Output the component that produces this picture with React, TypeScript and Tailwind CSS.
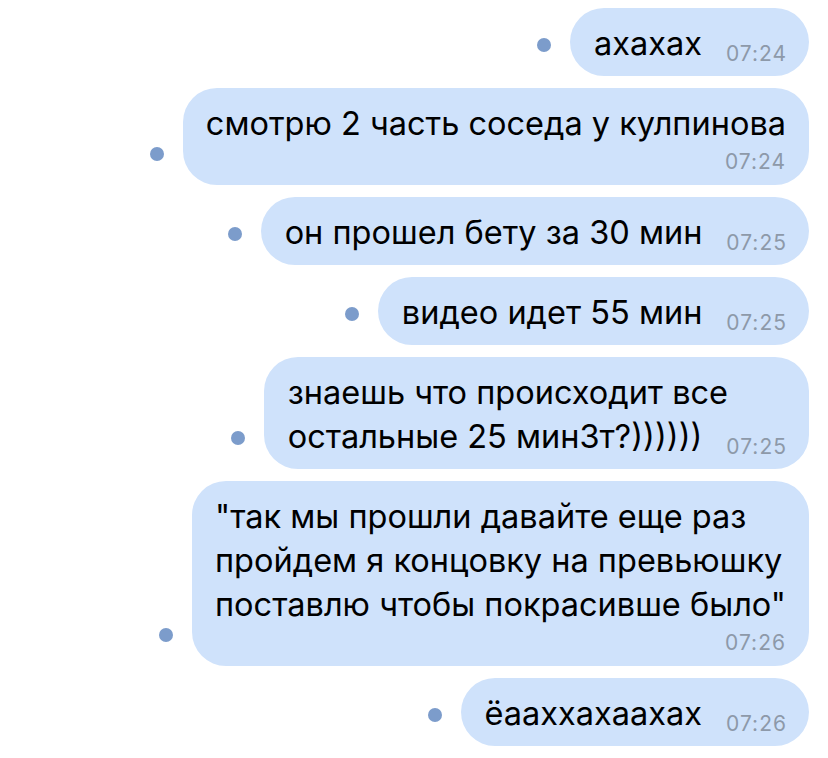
type Message = {
  lines: string[];
  time: string;
  timeBelow?: boolean;
};

const messages: Message[] = [
  { lines: ["ахахах"], time: "07:24" },
  { lines: ["смотрю 2 часть соседа у кулпинова"], time: "07:24", timeBelow: true },
  { lines: ["он прошел бету за 30 мин"], time: "07:25" },
  { lines: ["видео идет 55 мин"], time: "07:25" },
  { lines: ["знаешь что происходит все", "остальные 25 мин3т?))))))"], time: "07:25" },
  {
    lines: [
      "\"так мы прошли давайте еще раз",
      "пройдем я концовку на превьюшку",
      "поставлю чтобы покрасивше было\"",
    ],
    time: "07:26",
    timeBelow: true,
  },
  { lines: ["ёааххахаахах"], time: "07:26" },
];

function Time({ value, inline }: { value: string; inline?: boolean }) {
  return (
    <span
      className={
        inline
          ? "relative top-[6px] ml-[24px] text-[21px] leading-[0px] tracking-[1px] text-[#8d99a9]"
          : "block text-right text-[21px] leading-[24px] tracking-[1px] text-[#8d99a9]"
      }
    >
      {value}
    </span>
  );
}

function Bubble({ msg }: { msg: Message }) {
  const last = msg.lines.length - 1;
  return (
    <div className="flex items-end gap-[19px]">
      {/* unread marker */}
      <div className="mb-[24px] h-[14px] w-[14px] rounded-full bg-[#7c9ccb]" />
      <div
        className={
          msg.timeBelow
            ? "rounded-[34px] bg-[#cfe2fb] pl-[23px] pr-[23px] pt-[14px] pb-[11px]"
            : "rounded-[34px] bg-[#cfe2fb] pl-[24px] pr-[22px] pt-[14px] pb-[10px]"
        }
      >
        <div className="whitespace-nowrap text-[32.5px] leading-[44px] text-black">
          {msg.lines.map((line, i) => (
            <div key={i}>
              {line}
              {i === last && !msg.timeBelow && <Time value={msg.time} inline />}
            </div>
          ))}
        </div>
        {msg.timeBelow && (
          <div className="mt-[4px]">
            <Time value={msg.time} />
          </div>
        )}
      </div>
    </div>
  );
}

export default function App() {
  return (
    <div
      className="flex min-h-[758px] w-[828px] flex-col items-end gap-[12px] bg-white pr-[19px] pt-[8px]"
      style={{ fontFamily: "Inter, 'Noto Sans', sans-serif" }}
    >
      {messages.map((m, i) => (
        <Bubble key={i} msg={m} />
      ))}
    </div>
  );
}
